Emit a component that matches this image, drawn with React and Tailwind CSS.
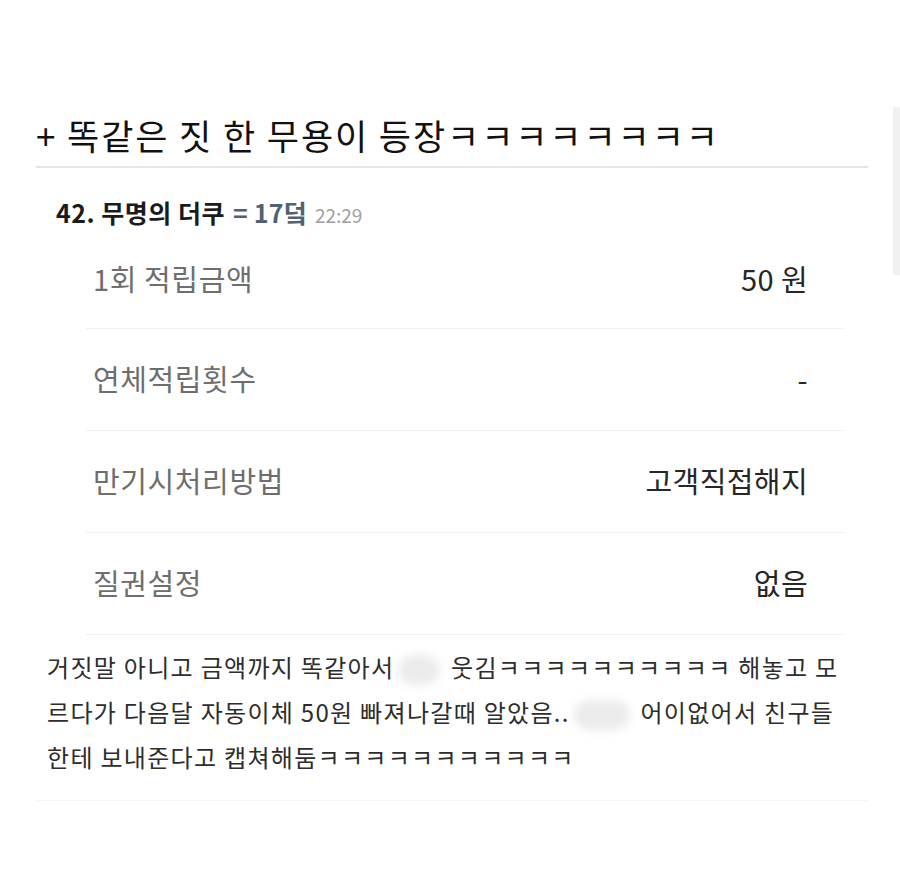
import React from 'react'

const rows = [
  { label: '1회 적립금액', value: '50 원' },
  { label: '연체적립횟수', value: '-' },
  { label: '만기시처리방법', value: '고객직접해지' },
  { label: '질권설정', value: '없음' },
]

// a smudged-out emoji in the comment body
function Smudge({ w }) {
  return <span className={`mx-[4px] inline-block h-[30px] align-middle rounded-full bg-[#ebebeb] blur-[5px] ${w}`} />
}

export default function App() {
  return (
    <div className="relative min-h-[877px] w-[900px] bg-white text-[#222]" style={{ fontFamily: '"Noto Sans CJK KR", "Noto Sans", sans-serif' }}>
      {/* scroll track on the right edge */}
      <div className="absolute right-0 top-[107px] h-[168px] w-[7px] bg-[#f1f1f1]" />

      <div className="pl-[36px] pr-[32px] pt-[110px]">
        <h1 className="border-b-2 border-[#e6e6e6] pb-[6px] text-[35px] leading-[50px] font-normal tracking-[1.9px] text-[#111]">
          + 똑같은 짓 한 무용이 등장ㅋㅋㅋㅋㅋㅋㅋㅋ
        </h1>

        <div className="mt-[27px] flex items-baseline gap-[8px] pl-[20px]">
          <span className="text-[25px] leading-[34px] font-bold tracking-[0.5px] text-[#1b1b1b]">42. 무명의 더쿠</span>
          <span className="text-[25px] leading-[34px] font-bold tracking-[0.2px] text-[#4f6272]">= 17덬</span>
          <span className="text-[19px] text-[#a0a0a0]">22:29</span>
        </div>

        <div className="ml-[50px] mr-[24px]">
          {rows.map((r, i) => (
            <div key={r.label} className={`flex items-center justify-between border-b border-[#f0f0f0] pl-[7px] pr-[36px] ${i === 0 ? 'h-[99px]' : 'h-[102px]'}`}>
              <span className="text-[29px] tracking-[0.6px] text-[#6e6e6e]">{r.label}</span>
              <span className="text-[29px] tracking-[0.4px] text-[#262626]">{r.value}</span>
            </div>
          ))}
        </div>

        <div className="border-b border-[#f5f5f5] pb-[21px] pl-[11px] pt-[9px]">
          <p className="text-[24px] leading-[45px] tracking-[1.3px] text-[#2d2d2d]">
            거짓말 아니고 금액까지 똑같아서<Smudge w="w-[42px]" /> 웃김ㅋㅋㅋㅋㅋㅋㅋㅋㅋㅋ 해놓고 모<br />
            르다가 다음달 자동이체 50원 빠져나갈때 알았음..<Smudge w="w-[56px]" /> 어이없어서 친구들<br />
            한테 보내준다고 캡쳐해둠ㅋㅋㅋㅋㅋㅋㅋㅋㅋㅋㅋ
          </p>
        </div>
      </div>
    </div>
  )
}
